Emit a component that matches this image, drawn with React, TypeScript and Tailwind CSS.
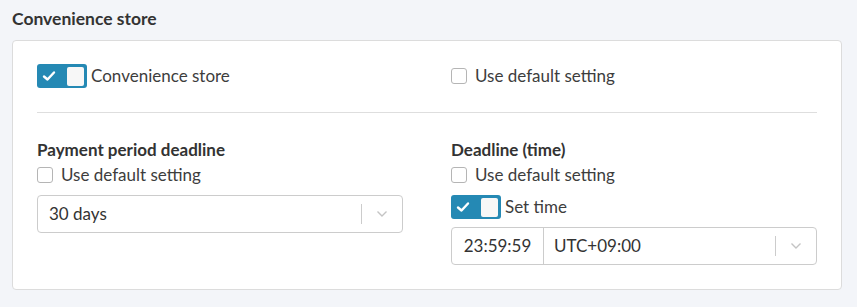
import React from 'react';

const font = { fontFamily: 'Lato, "Open Sans", sans-serif' };

const Toggle = ({ label }: { label: string }) => (
    <div className="flex h-6 items-center gap-1">
        <div className="flex h-6 w-[50px] items-center justify-between rounded-[3px] bg-[#2589b4] pl-[5px] pr-[3px]">
            <svg width="14" height="12" viewBox="0 0 14 12" fill="none">
                <path d="M2 6.5 L5.5 9.5 L12 2.5" stroke="white" strokeWidth="2.4" strokeLinecap="round" strokeLinejoin="round" />
            </svg>
            <div className="h-[19px] w-[17px] rounded-[2px] bg-[#f7f7f7]" />
        </div>
        <span className="text-[17px] leading-[20px] text-[#3d3d3d]">{label}</span>
    </div>
);

const Checkbox = ({ label }: { label: string }) => (
    <label className="flex h-5 items-center gap-2">
        <span className="h-4 w-4 rounded-[3px] border border-[#b5b5b5] bg-white" />
        <span className="text-[17px] leading-[20px] text-[#3d3d3d]">{label}</span>
    </label>
);

const Chevron = () => (
    <svg width="12" height="8" viewBox="0 0 12 8" fill="none">
        <path d="M1.5 1.5 L6 6 L10.5 1.5" stroke="#c4c4c4" strokeWidth="1.4" />
    </svg>
);

const App: React.FC = () => {
    return (
        <div className="min-h-screen bg-[#f3f5f9] pl-3 pr-[15px] pt-[7px] pb-[17px]" style={font}>
            <h2 className="mb-[9px] text-[17.5px] font-bold leading-[24px] text-[#333]">Convenience store</h2>
            <div className="rounded-[4px] border border-[#dcdcdc] bg-white px-6 pt-[23px] pb-[24px]">
                <div className="grid grid-cols-2 gap-12">
                    <Toggle label="Convenience store" />
                    <div className="flex items-center">
                        <Checkbox label="Use default setting" />
                    </div>
                </div>
                <div className="mt-[24px] mb-[26px] h-px bg-[#dedede]" />
                <div className="grid grid-cols-2 gap-12">
                    <div className="flex flex-col">
                        <div className="text-[17px] font-bold leading-[22px] text-[#333]">Payment period deadline</div>
                        <div className="mt-[4px]">
                            <Checkbox label="Use default setting" />
                        </div>
                        <div className="mt-[10px] flex h-[38px] items-center rounded-[4px] border border-[#cccccc] pl-[11px] pr-[14px]">
                            <span className="flex-1 text-[17px] text-[#333]">30 days</span>
                            <div className="mr-[14px] h-5 w-px bg-[#cccccc]" />
                            <Chevron />
                        </div>
                    </div>
                    <div className="flex flex-col">
                        <div className="text-[17px] font-bold leading-[22px] text-[#333]">Deadline (time)</div>
                        <div className="mt-[4px]">
                            <Checkbox label="Use default setting" />
                        </div>
                        <div className="mt-[10px]">
                            <Toggle label="Set time" />
                        </div>
                        <div className="mt-[8px] flex h-[38px] items-stretch rounded-[4px] border border-[#cccccc]">
                            <div className="flex w-[92px] items-center justify-center border-r border-[#cccccc] text-[17px] text-[#333]">
                                23:59:59
                            </div>
                            <div className="flex flex-1 items-center pl-[10px] pr-[14px]">
                                <span className="flex-1 text-[17px] text-[#333]">UTC+09:00</span>
                                <div className="mr-[14px] h-5 w-px bg-[#cccccc]" />
                                <Chevron />
                            </div>
                        </div>
                    </div>
                </div>
            </div>
        </div>
    );
};

export default App;
